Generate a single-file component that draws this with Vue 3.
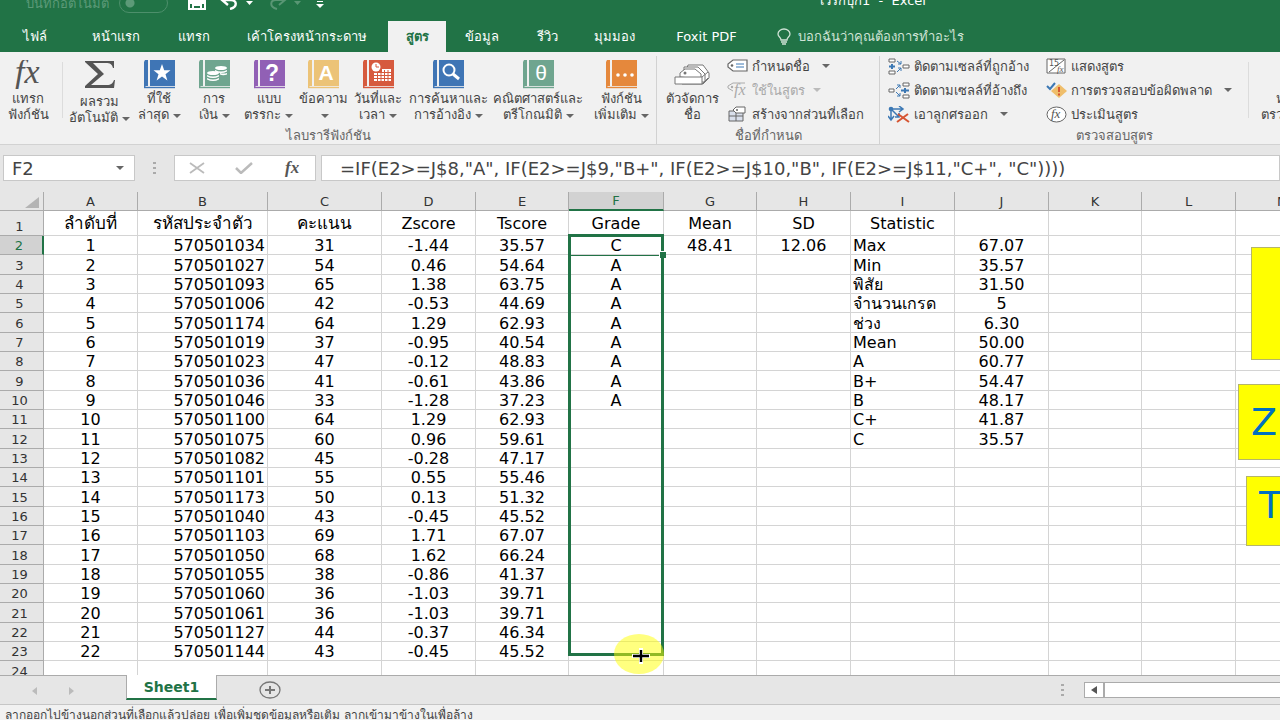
<script setup>
import { ref, computed } from 'vue'

const tabs = ['ไฟล์', 'หน้าแรก', 'แทรก', 'เค้าโครงหน้ากระดาษ', 'สูตร', 'ข้อมูล', 'รีวิว', 'มุมมอง', 'Foxit PDF']
const activeTab = ref('สูตร')
const autoSave = ref(false)
const cellName = ref('F2')
const formula = ref('=IF(E2>=J$8,"A", IF(E2>=J$9,"B+", IF(E2>=J$10,"B", IF(E2>=J$11,"C+", "C"))))')

const library = [
  { icon: 'star', color: 'blue', lines: ['ที่ใช้', 'ล่าสุด'] },
  { icon: 'coins', color: 'teal', lines: ['การ', 'เงิน'] },
  { icon: 'question', color: 'purple', lines: ['แบบ', 'ตรรกะ'] },
  { icon: 'text', color: 'yellow', lines: ['ข้อความ', ''] },
  { icon: 'date', color: 'red', lines: ['วันที่และ', 'เวลา'] },
  { icon: 'search', color: 'blue', lines: ['การค้นหาและ', 'การอ้างอิง'] },
  { icon: 'theta', color: 'teal', lines: ['คณิตศาสตร์และ', 'ตรีโกณมิติ'] },
  { icon: 'more', color: 'orange', lines: ['ฟังก์ชัน', 'เพิ่มเติม'] }
]

const columns = ['A', 'B', 'C', 'D', 'E', 'F', 'G', 'H', 'I', 'J', 'K', 'L', 'M', 'N']
const titles = ['ลำดับที่', 'รหัสประจำตัว', 'คะแนน', 'Zscore', 'Tscore', 'Grade', 'Mean', 'SD', 'Statistic']

const students = [
  ['570501034', '31', '-1.44', '35.57', 'C'],
  ['570501027', '54', '0.46', '54.64', 'A'],
  ['570501093', '65', '1.38', '63.75', 'A'],
  ['570501006', '42', '-0.53', '44.69', 'A'],
  ['570501174', '64', '1.29', '62.93', 'A'],
  ['570501019', '37', '-0.95', '40.54', 'A'],
  ['570501023', '47', '-0.12', '48.83', 'A'],
  ['570501036', '41', '-0.61', '43.86', 'A'],
  ['570501046', '33', '-1.28', '37.23', 'A'],
  ['570501100', '64', '1.29', '62.93', ''],
  ['570501075', '60', '0.96', '59.61', ''],
  ['570501082', '45', '-0.28', '47.17', ''],
  ['570501101', '55', '0.55', '55.46', ''],
  ['570501173', '50', '0.13', '51.32', ''],
  ['570501040', '43', '-0.45', '45.52', ''],
  ['570501103', '69', '1.71', '67.07', ''],
  ['570501050', '68', '1.62', '66.24', ''],
  ['570501055', '38', '-0.86', '41.37', ''],
  ['570501060', '36', '-1.03', '39.71', ''],
  ['570501061', '36', '-1.03', '39.71', ''],
  ['570501127', '44', '-0.37', '46.34', ''],
  ['570501144', '43', '-0.45', '45.52', '']
]

const statistics = [
  ['Max', '67.07'],
  ['Min', '35.57'],
  ['พิสัย', '31.50'],
  ['จำนวนเกรด', '5'],
  ['ช่วง', '6.30'],
  ['Mean', '50.00'],
  ['A', '60.77'],
  ['B+', '54.47'],
  ['B', '48.17'],
  ['C+', '41.87'],
  ['C', '35.57']
]

const rows = computed(() => {
  const list = [{ num: 1, cells: columns.map((c, i) => titles[i] || '') }]
  for (let i = 0; i < 40; i++) {
    const s = students[i]
    const stat = statistics[i] || ['', '']
    const cells = s ? [String(i + 1), ...s] : ['', '', '', '', '', '']
    cells.push(i === 0 ? '48.41' : '', i === 0 ? '12.06' : '', stat[0], stat[1])
    while (cells.length < columns.length) cells.push('')
    list.push({ num: i + 2, cells })
  }
  return list
})
</script>

<template>
  <div class="excel">
    <header class="titlebar">
      <label class="autosave">
        <span>บันทึกอัตโนมัติ</span>
        <input v-model="autoSave" type="checkbox">
      </label>
      <div class="quick">
        <button aria-label="บันทึก">
          <svg width="18" height="20" viewBox="0 0 18 20"><path d="M1 1h16v18H1z M4 1v10h10V1 M5 19v-4h8v4" fill="none" stroke="#fff" stroke-width="2" /><path d="M1 10h16v4H1z" fill="#fff" /></svg>
        </button>
        <button aria-label="เลิกทำ">
          <svg width="34" height="20" viewBox="0 0 34 20"><path d="M2 10h9c6 0 7 7-1 9M8 4l-6 6 6 5" fill="none" stroke="#fff" stroke-width="2.4" /><path d="M26 11h7l-3.500 4z" fill="#fff" /></svg>
        </button>
        <button aria-label="ทำซ้ำ" class="faded">
          <svg width="34" height="20" viewBox="0 0 34 20"><path d="M17 10H8c-6 0-7 7 1 9M11 4l6 6-6 5" fill="none" stroke="#fff" stroke-width="2" /><path d="M26 11h7l-3.500 4z" fill="#fff" /></svg>
        </button>
        <button aria-label="กำหนดแถบเครื่องมือ">
          <svg width="8" height="20" viewBox="0 0 8 20"><path d="M1 11h6v1H1zM0 14h8l-4 4z" fill="#fff" /></svg>
        </button>
      </div>
      <h1>เวิร์กบุ๊ก1 &nbsp;- &nbsp;Excel</h1>
    </header>

    <nav class="tabs">
      <button v-for="tab in tabs" :key="tab" :class="{ active: tab === activeTab }" @click="activeTab = tab">{{ tab }}</button>
      <button class="tellme">
        <svg width="14" height="18" viewBox="0 0 14 18"><path d="M4 12C4 9 1 9 1 6a6 5 0 0 1 12 0c0 3-3 3-3 6zM4 14h6M5 16h4" fill="none" stroke="#cfe3d6" stroke-width="1.3" /></svg>
        บอกฉันว่าคุณต้องการทำอะไร
      </button>
    </nav>

    <section class="ribbon">
      <div class="group">
        <div class="tools library">
          <button class="big">
            <svg class="pic" width="34" height="29" viewBox="0 0 34 29"><text x="4" y="23" class="serif" font-size="34">fx</text></svg>
            <span>แทรก</span>
            <span>ฟังก์ชัน</span>
          </button>
          <i class="divider"></i>
          <button class="big low">
            <svg class="pic" width="32" height="29" viewBox="0 0 32 29"><path d="M1 1h29v7h-1c-1-4-3-5-7-5H9l11 11L7 25h16c4 0 6-2 7-5h1l-1 8H1v-2l13-12L1 2z" fill="#555" /></svg>
            <span>ผลรวม</span>
            <span>อัตโนมัติ<b class="caret"></b></span>
          </button>
          <button v-for="item in library" :key="item.icon" class="big">
            <svg class="pic" :class="item.color" width="32" height="29" viewBox="0 0 32 29">
              <path d="M2 0h3v26H3l-2 2V2z" fill="currentColor" />
              <path d="M7 0h25v26H7z" fill="currentColor" />
              <path d="M1 27.500h31" stroke="currentColor" stroke-width="1.400" />
              <path v-if="item.icon === 'star'" d="M19 4l2.200 6.200h6.300l-5 4 1.900 6.200-5.400-3.800-5.400 3.800 1.900-6.200-5-4h6.300z" fill="#fff" />
              <g v-if="item.icon === 'coins'" fill="#fff">
                <ellipse cx="23" cy="8" rx="6" ry="2" /><path d="M17 10q6 3 12 0v1.500q-6 3-12 0zM22 13q4 1 7 0v1.500q-4 1.500-7 0z" />
                <ellipse cx="15" cy="13" rx="6" ry="2" /><path d="M9 15q6 3 12 0v1.500q-6 3-12 0zM9 18q6 3 12 0v1.500q-6 3-12 0z" />
              </g>
              <text v-if="item.icon === 'question'" x="19" y="21" class="mark bold" font-size="23">?</text>
              <text v-if="item.icon === 'text'" x="19" y="20" class="mark bold" font-size="21">A</text>
              <text v-if="item.icon === 'theta'" x="19" y="20" class="mark" font-size="21">θ</text>
              <g v-if="item.icon === 'date'">
                <circle cx="14" cy="7" r="4.500" fill="#fff" /><path d="M14 4v3h3" fill="none" stroke="currentColor" />
                <path d="M12 13h17v8H12z" fill="#fff" /><path d="M20 9h9v3h-9z" fill="#fff" />
                <path d="M12 15.500h17M12 18.500h17M15.500 13v8M19 9v12M22.500 10v11M26 10v11" stroke="currentColor" />
              </g>
              <g v-if="item.icon === 'search'" fill="none" stroke="#fff"><circle cx="17" cy="10" r="5.500" stroke-width="2" /><path d="M21 14l6 5" stroke-width="3" /></g>
              <g v-if="item.icon === 'more'" fill="#fff"><circle cx="13" cy="15" r="1.800" /><circle cx="20" cy="15" r="1.800" /><circle cx="27" cy="15" r="1.800" /></g>
            </svg>
            <span>{{ item.lines[0] }}</span>
            <span>{{ item.lines[1] }}<b class="caret"></b></span>
          </button>
        </div>
        <h2>ไลบรารีฟังก์ชัน</h2>
      </div>

      <div class="group">
        <div class="tools names">
          <button class="big">
            <svg class="pic" width="36" height="29" viewBox="0 0 36 29"><g fill="#fff" stroke="#777"><path d="M14 5h15l6 8v5l-6 6H8z" /><path d="M10 7h14l7 7v8H10z" /><path d="M6 17V13l5-4h10l6 5v5z" /><path d="M1 17h27v7H1zM28 17l6-5M28 24l6-6" /></g><circle cx="11" cy="13" r="1.500" fill="#777" /></svg>
            <span>ตัวจัดการ</span>
            <span>ชื่อ</span>
          </button>
          <div class="list">
            <button>
              <svg width="21" height="14" viewBox="0 0 21 14"><path d="M6 1h14v11H6L1 8V5z" fill="#fff" stroke="#666" stroke-width="1.200" /><circle cx="5" cy="6.500" r="1.300" fill="#666" /><path d="M9 5h8M9 8h8" stroke="#3c78b4" /></svg>
              กำหนดชื่อ<b class="caret wide"></b>
            </button>
            <button disabled>
              <svg width="21" height="16" viewBox="0 0 21 16"><path d="M6 9L1 6V4l5-3h12" fill="none" stroke="#aaa" /><circle cx="5" cy="5" r="1.200" fill="#aaa" /><text x="7" y="13" class="serif grey" font-size="16">fx</text></svg>
              ใช้ในสูตร<b class="caret"></b>
            </button>
            <button>
              <svg width="21" height="16" viewBox="0 0 21 16"><path d="M2 5h14v10H2zM2 10h14M9 5v10" fill="#d9dfec" stroke="#666" /><path d="M9 1h9v6H9L6 4z" fill="#fff" stroke="#666" /><circle cx="10" cy="4" r="1" fill="#666" /></svg>
              สร้างจากส่วนที่เลือก
            </button>
          </div>
        </div>
        <h2>ชื่อที่กำหนด</h2>
      </div>

      <div class="group">
        <div class="tools audit">
          <div class="list">
            <button>
              <svg width="22" height="17" viewBox="0 0 22 17"><path d="M1 1h6v3H1zM1 13h6v3H1zM15 7h6v3h-6z" fill="#fff" stroke="#666" /><path d="M4 6v5M1 8.500h6" stroke="#3c78b4" stroke-width="2" /><path d="M9 3l4 3M13 3v3h-3M9 14l4-4M10 10h3v3" fill="none" stroke="#3c78b4" /></svg>
              ติดตามเซลล์ที่ถูกอ้าง
            </button>
            <button>
              <svg width="22" height="17" viewBox="0 0 22 17"><path d="M1 7h5v3H1zM15 1h6v3h-6zM15 13h6v3h-6z" fill="#fff" stroke="#666" /><path d="M17 6v5M13 8.500h8" stroke="#3c78b4" stroke-width="2" /><path d="M8 7l4-4M9 3h3v3M8 10l4 4M12 11v3H9" fill="none" stroke="#3c78b4" /></svg>
              ติดตามเซลล์ที่อ้างถึง
            </button>
            <button>
              <svg width="22" height="17" viewBox="0 0 22 17"><path d="M3 3h11M3 3v10M3 3l8 8M11 0l4 3-4 3M0 10l3 4 3-4M7 11h4V7" fill="none" stroke="#3c78b4" stroke-width="1.500" /><circle cx="3" cy="3" r="2.300" fill="#3c78b4" /><path d="M10 8l11 8M20 8L9 16" stroke="#d65532" stroke-width="2" /></svg>
              เอาลูกศรออก<b class="caret wide"></b>
            </button>
          </div>
          <div class="list">
            <button>
              <svg width="21" height="17" viewBox="0 0 21 17"><path d="M1 1h18v14H1zM3 14L18 2" fill="#fff" stroke="#666" /><text x="3" y="8" font-size="8" fill="#555">15</text><text x="11" y="14" class="serif" font-size="9">fx</text></svg>
              แสดงสูตร
            </button>
            <button>
              <svg width="21" height="17" viewBox="0 0 21 17"><path d="M13 2l8 7-8 7-8-7z" fill="#efbe6b" /><path d="M13 5v5M13 11.500v2" stroke="#d65532" stroke-width="2" /><path d="M1 4l3 3 5-6" fill="none" stroke="#3c78b4" stroke-width="2" /></svg>
              การตรวจสอบข้อผิดพลาด<b class="caret wide"></b>
            </button>
            <button>
              <svg width="21" height="17" viewBox="0 0 21 17"><ellipse cx="10.500" cy="8.500" rx="9.500" ry="7.500" fill="#fff" stroke="#666" /><text x="5" y="12" class="serif" font-size="13">fx</text></svg>
              ประเมินสูตร
            </button>
          </div>
          <i class="divider"></i>
          <button class="big">
            <svg class="pic" width="32" height="29"></svg>
            <span>หน้าต่าง</span>
            <span>ตรวจสอบสูตร</span>
          </button>
        </div>
        <h2>ตรวจสอบสูตร</h2>
      </div>
    </section>

    <section class="formulabar">
      <div class="namebox">
        <input v-model="cellName" aria-label="กล่องชื่อ">
        <b class="caret"></b>
      </div>
      <i class="dots"></i>
      <div class="actions">
        <button aria-label="ยกเลิก"><svg width="16" height="12" viewBox="0 0 16 12"><path d="M1 1l14 10M15 1L1 11" stroke="#bbb" stroke-width="1.800" /></svg></button>
        <button aria-label="ใส่"><svg width="18" height="12" viewBox="0 0 18 12"><path d="M1 6l5 5L17 1" fill="none" stroke="#bbb" stroke-width="2.500" /></svg></button>
        <button aria-label="แทรกฟังก์ชัน"><svg width="18" height="18" viewBox="0 0 18 18"><text x="2" y="14" class="serif bold" font-size="17">fx</text></svg></button>
      </div>
      <input v-model="formula" class="formula" aria-label="แถบสูตร">
    </section>

    <main class="sheet">
      <table>
        <colgroup>
          <col class="head">
          <col v-for="c in columns" :key="c" :class="'col-' + c.toLowerCase()">
        </colgroup>
        <thead>
          <tr>
            <th class="corner"><svg width="14" height="11" viewBox="0 0 14 11"><path d="M14 0v11H0z" fill="#b4b4b4" /></svg></th>
            <th v-for="c in columns" :key="c" scope="col" :class="{ current: c === 'F' }">{{ c }}</th>
          </tr>
        </thead>
        <tbody>
          <tr v-for="row in rows" :key="row.num">
            <th scope="row" :class="{ current: row.num === 2 }">{{ row.num }}</th>
            <td v-for="(cell, i) in row.cells" :key="i" :class="'cell-' + columns[i].toLowerCase()">
              {{ cell }}
              <div v-if="row.num === 2 && i === 5" class="selection"><i class="handle"></i></div>
            </td>
          </tr>
        </tbody>
      </table>
      <div class="note blank"></div>
      <div class="note zed">Z</div>
      <div class="note tee">T</div>
      <div class="pointer">
        <svg width="50" height="40" viewBox="0 0 50 40"><path d="M27 14v16M18 22h18" stroke="#fff" stroke-width="4" /><path d="M27 16v12M19 22h16" stroke="#000" stroke-width="2.400" /></svg>
      </div>
    </main>

    <footer class="sheetbar">
      <div class="arrows">
        <button aria-label="ก่อนหน้า"><svg width="5" height="8" viewBox="0 0 5 8"><path d="M5 0v8L0 4z" fill="#bbb" /></svg></button>
        <button aria-label="ถัดไป"><svg width="5" height="8" viewBox="0 0 5 8"><path d="M0 0v8l5-4z" fill="#bbb" /></svg></button>
      </div>
      <button class="sheettab">Sheet1</button>
      <button class="add" aria-label="แผ่นงานใหม่"><svg width="22" height="18" viewBox="0 0 22 18"><ellipse cx="11" cy="9" rx="10" ry="8" fill="none" stroke="#777" stroke-width="1.300" /><path d="M11 5v8M6 9h10" stroke="#777" stroke-width="2" /></svg></button>
      <i class="dots"></i>
      <div class="scroll">
        <button aria-label="เลื่อนซ้าย"><svg width="6" height="8" viewBox="0 0 6 8"><path d="M6 0v8L0 4z" fill="#555" /></svg></button>
        <div class="track"></div>
      </div>
    </footer>
    <div class="status">ลากออกไปข้างนอกส่วนที่เลือกแล้วปล่อย เพื่อเพิ่มชุดข้อมูลหรือเติม ลากเข้ามาข้างในเพื่อล้าง</div>
  </div>
</template>

<style>
body {
  margin: 0;
  overflow: hidden;
}
</style>

<style scoped>
* {
  box-sizing: border-box;
}
.excel {
  height: 100vh;
  display: flex;
  flex-direction: column;
  overflow: hidden;
  background: #e6e6e6;
  color: #444;
  font-family: "DejaVu Sans", "Noto Sans", sans-serif;
  font-size: 13px;
}
button {
  border: 0;
  padding: 0;
  background: none;
  color: inherit;
  font: inherit;
  white-space: nowrap;
}
input {
  min-width: 0;
  border: 0;
  padding: 0;
  outline: 0;
  background: none;
  color: inherit;
  font: inherit;
}
h1,
h2 {
  margin: 0;
  font-size: 13px;
  font-weight: normal;
}
svg {
  flex: none;
}
.serif {
  font-family: "Liberation Serif", serif;
  font-style: italic;
  fill: #555;
}
.serif.grey {
  fill: #aaa;
}
.caret {
  display: inline-block;
  margin-left: 4px;
  border: 4px solid transparent;
  border-top-color: #666;
  border-bottom: 0;
  vertical-align: middle;
}
.caret.wide {
  margin-left: 8px;
}
.dots {
  width: 3px;
  height: 12px;
  background: repeating-linear-gradient(#aaa 0 2px, transparent 2px 5px);
}

/* title bar */
.titlebar {
  flex: none;
  height: 21px;
  display: flex;
  align-items: flex-end;
  overflow: hidden;
  background: #217346;
  color: #fff;
}
.autosave {
  flex: none;
  display: flex;
  align-items: center;
  gap: 10px;
  height: 36px;
  padding-left: 26px;
  color: #5c9a78;
}
.autosave input {
  appearance: none;
  width: 49px;
  height: 20px;
  margin: 0;
  border: 1px solid #4d8f6b;
  border-radius: 10px;
  background: radial-gradient(circle at 10px 9px, #5c9a78 4px, transparent 5px);
}
.quick {
  flex: none;
  display: flex;
  align-items: flex-start;
  gap: 14px;
  height: 31px;
  margin-left: 20px;
}
.quick .faded {
  opacity: 0.25;
}
h1 {
  height: 30px;
  padding-left: 496px;
  line-height: 20px;
  white-space: nowrap;
}

/* ribbon tabs */
.tabs {
  flex: none;
  height: 31px;
  display: grid;
  grid-template-columns: 70px 92px 64px 162px 58px 72px 58px 77px 107px auto;
  justify-content: start;
  background: #217346;
  color: #fff;
}
.tabs .active {
  background: #f1f1f1;
  color: #217346;
  font-weight: bold;
}
.tabs .tellme {
  display: flex;
  align-items: center;
  gap: 7px;
  padding-left: 17px;
  color: #cfe3d6;
}

/* ribbon */
.ribbon {
  flex: none;
  height: 93px;
  display: flex;
  border-bottom: 1px solid #d2d2d2;
  background: #f1f1f1;
}
.group {
  flex: none;
  height: 88px;
  margin-top: 4px;
  border-right: 1px solid #d2d2d2;
}
.tools {
  display: grid;
  height: 72px;
}
.library {
  grid-template-columns: 56px 12px 63px 56px 54px 55px 54px 56px 84px 96px 70px;
}
.names {
  grid-template-columns: 70px 152px;
}
.audit {
  grid-template-columns: 158px 202px 1px 100px;
  padding-left: 8px;
}
.group h2 {
  color: #666;
  line-height: 16px;
  text-align: center;
}
.divider {
  width: 1px;
  height: 56px;
  margin: 6px auto 0;
  background: #dcdcdc;
}
.big {
  display: flex;
  flex-direction: column;
  align-items: center;
  padding-top: 4px;
}
.big .pic {
  margin-bottom: 2px;
}
.big.low .pic {
  margin-bottom: 5px;
}
.big span {
  height: 16px;
  line-height: 16px;
}
.blue { color: #3f75b5; }
.teal { color: #6fa58f; }
.purple { color: #9160b5; }
.yellow { color: #ecc377; }
.red { color: #d65a3e; }
.orange { color: #e5883c; }
.mark {
  fill: #fff;
  text-anchor: middle;
  font-family: "Liberation Sans", sans-serif;
}
.bold {
  font-weight: bold;
}
.list {
  margin-top: -2px;
}
.list button {
  display: flex;
  align-items: center;
  gap: 4px;
  height: 24px;
}
.list button:disabled {
  color: #aaa;
}
.list button:disabled .caret {
  border-top-color: #bbb;
}

/* formula bar */
.formulabar {
  flex: none;
  height: 47px;
  display: flex;
  align-items: center;
  padding-bottom: 1px;
  font-size: 18px;
}
.namebox,
.actions,
.formula {
  height: 26px;
  border: 1px solid #c8c8c8;
  background: #fff;
}
.namebox {
  display: flex;
  align-items: center;
  width: 132px;
  margin-left: 3px;
  padding: 0 10px 0 8px;
}
.namebox input {
  flex: 1;
}
.formulabar .dots {
  margin: 0 18px;
}
.actions {
  display: flex;
  align-items: center;
  justify-content: space-between;
  width: 142px;
  padding: 0 14px;
}
.actions button {
  display: flex;
}
.formula {
  flex: 1;
  margin-left: 5px;
  padding-left: 18px;
}

/* grid */
.sheet {
  flex: 1;
  min-height: 0;
  position: relative;
  overflow: hidden;
  background: #fff;
}
table {
  width: 1330px;
  table-layout: fixed;
  border-collapse: separate;
  border-spacing: 0;
  color: #000;
  font-size: 16px;
}
.head { width: 44px; }
.col-a, .col-d, .col-h, .col-j, .col-l, .col-m, .col-n { width: 94px; }
.col-b { width: 130px; }
.col-c { width: 114px; }
.col-e, .col-g, .col-k { width: 93px; }
.col-f { width: 95px; }
.col-i { width: 104px; }
th,
td {
  padding: 1px 0 0;
  border-right: 1px solid #d4d4d4;
  border-bottom: 1px solid #d4d4d4;
  line-height: 17px;
  text-align: center;
  white-space: nowrap;
}
th {
  background: #e6e6e6;
  border-color: #ababab;
  color: #333;
  font-size: 13px;
  font-weight: normal;
}
thead th {
  height: 19px;
  padding: 0;
}
.corner svg {
  display: block;
  margin: 3px 4px 0 auto;
}
tbody tr {
  height: 19px;
}
tbody tr:nth-child(3n) {
  height: 20px;
}
tbody tr:first-child {
  height: 25px;
}
tbody th {
  padding-right: 4px;
  vertical-align: bottom;
}
th.current {
  background: #d2d2d2;
  color: #217346;
}
thead th.current {
  border-bottom: 2px solid #217346;
}
tbody th.current {
  border-right: 2px solid #217346;
}
tbody tr:first-child .cell-a,
tbody tr:first-child .cell-b,
tbody tr:first-child .cell-c {
  font-size: 17px;
}
tbody tr:not(:first-child) .cell-b {
  padding-right: 2px;
  text-align: right;
}
tbody tr:not(:first-child) .cell-i {
  padding-left: 2px;
  text-align: left;
}
.cell-f {
  position: relative;
}
.selection {
  position: absolute;
  z-index: 1;
  top: -2px;
  left: -1px;
  width: 96px;
  height: 422px;
  border: 3px solid #217346;
}
.selection::before {
  content: "";
  display: block;
  height: 18px;
  border-bottom: 1px solid #217346;
}
.handle {
  position: absolute;
  top: 14px;
  right: -5px;
  width: 7px;
  height: 7px;
  border: solid #fff;
  border-width: 1px 0 0 1px;
  background: #217346;
}
.note {
  position: absolute;
  width: 300px;
  border: 1px solid #b5b56a;
  background: #ff0;
  color: #0070c0;
  font-size: 38px;
}
.blank {
  top: 55px;
  left: 1251px;
  height: 113px;
}
.zed {
  top: 192px;
  left: 1238px;
  height: 76px;
  padding-left: 12px;
  line-height: 74px;
}
.tee {
  top: 284px;
  left: 1246px;
  height: 70px;
  padding-left: 12px;
  line-height: 56px;
}
.pointer {
  position: absolute;
  z-index: 2;
  top: 442px;
  left: 614px;
  width: 50px;
  height: 40px;
  border-radius: 50%;
  background: rgba(255, 255, 0, 0.5);
}

/* sheet tabs and status */
.sheetbar {
  flex: none;
  height: 30px;
  display: flex;
  align-items: center;
  border-top: 1px solid #ababab;
  border-bottom: 1px solid #c6c6c6;
}
.arrows {
  display: flex;
  gap: 32px;
  width: 126px;
  padding-left: 32px;
}
.sheettab {
  align-self: flex-start;
  width: 91px;
  height: 25px;
  margin-top: -1px;
  border: solid #ababab;
  border-width: 0 1px 2px;
  border-bottom-color: #217346;
  background: #fff;
  color: #217346;
  font-size: 14px;
  font-weight: bold;
}
.add {
  height: 18px;
  margin-left: 42px;
}
.sheetbar .dots {
  margin-left: auto;
  margin-right: 20px;
}
.scroll {
  display: flex;
  width: 196px;
  height: 16px;
  border: 1px solid #ababab;
  border-right: 0;
  background: #fff;
}
.scroll button {
  display: flex;
  align-items: center;
  justify-content: center;
  width: 20px;
  border-right: 2px solid #ababab;
}
.status {
  flex: none;
  height: 15px;
  padding-left: 5px;
  overflow: hidden;
  background: #f1f1f1;
  font-size: 12px;
  line-height: 20px;
  white-space: nowrap;
}
</style>
